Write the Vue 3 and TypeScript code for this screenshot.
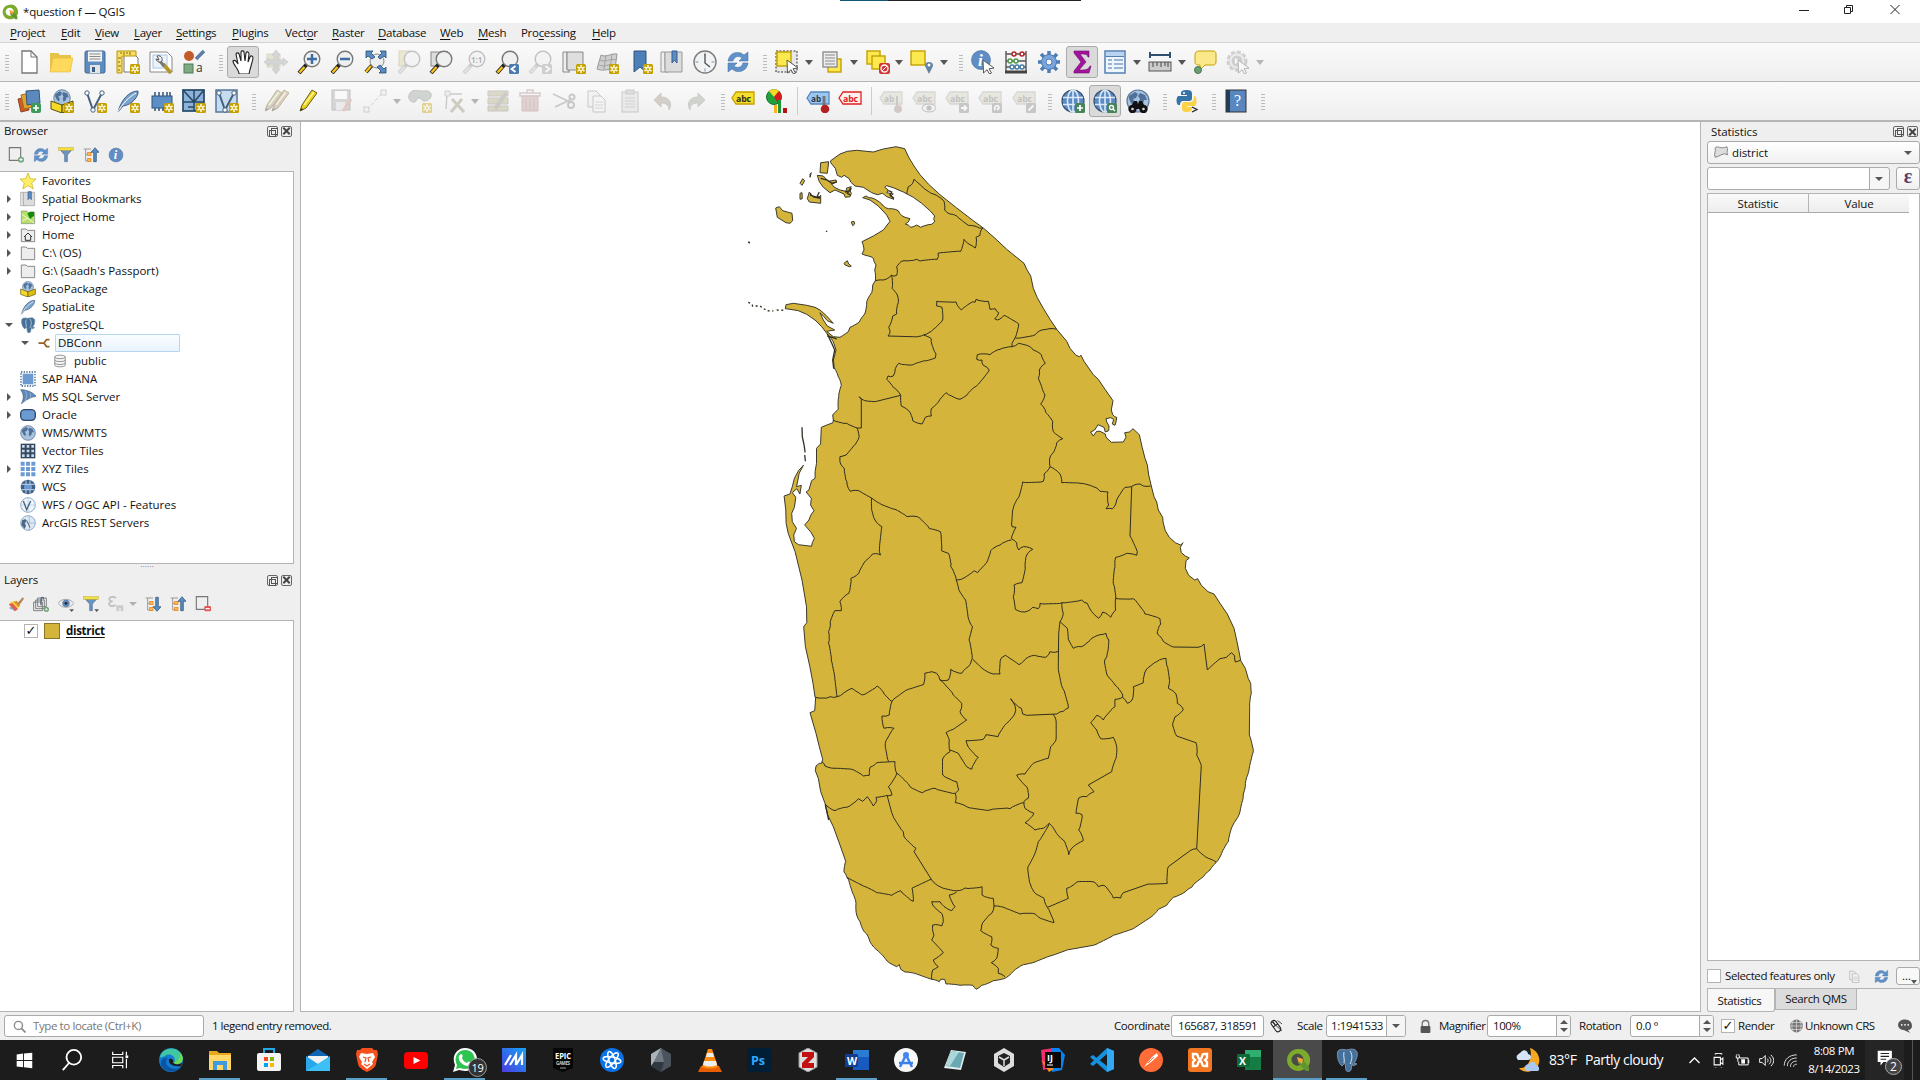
<script setup lang="ts">
type Pt = [number, number]
type Sheet = { x: number; y: number; sx: number; sy: number }
interface Tool { x: number; k: string; on?: boolean; dim?: boolean }

/* ---------- icon fragments ---------- */
const star = '<g><rect x="14" y="14" width="10" height="10" rx="1.5" fill="#c4a000"/><path d="M19 15v8M15.500 17l7 4M22.500 17l-7 4" stroke="#fffbe0" stroke-width="1.500"/><circle cx="19" cy="19" r="1.100" fill="#c4a000"/></g>'
const mag = (inner: string, gray = false) =>
  `<path d="M2 23l8-9" stroke="${gray ? '#999' : '#222'}" stroke-width="4"/><path d="M2.500 22.500l5-5.500" stroke="${gray ? '#ccc' : '#f8c41c'}" stroke-width="2.400"/><circle cx="15" cy="9" r="7.800" fill="#eef1ef" stroke="#777" stroke-width="1.400"/>${inner}`
const back = (d: string, c: string) => `<rect x="14" y="14" width="10" height="10" rx="1.500" fill="${c}"/><path d="${d}" fill="none" stroke="#fff" stroke-width="1.800"/>`
const tag = (fill: string, stroke: string, txt: string, tc: string) =>
  `<path d="M1 9l4-6h18v12H5z" fill="${fill}" stroke="${stroke}" stroke-width="1.300"/><text x="5" y="12.500" font-family="Open Sans, sans-serif" font-weight="700" font-size="9.500" textLength="${txt.length * 5}" lengthAdjust="spacingAndGlyphs" fill="${tc}">${txt}</text>`
const globe = '<circle cx="12" cy="12" r="11" fill="#5b8ac6" stroke="#39536f" stroke-width="1.200"/><g fill="none" stroke="#dbe9f5" stroke-width="1.600"><path d="M2 8.500h20M2 15.500h20M12 1v22"/><ellipse cx="12" cy="12" rx="5.500" ry="11"/></g>'
const earth = '<circle cx="12" cy="12" r="11" fill="#a9c3df" stroke="#5e7a99" stroke-width="1.200"/><path d="M3 7l6-4 3 2-2 4-3 1 2 3-1 4-3-3-2-4zM14 4l5 2 2 5-3 0-1 4-3 2-1-4 1-3-2-3z" fill="#4f7099"/>'
const cursor = '<path d="M12 10l11 8-5 .8 2.500 4.200-2 1-2.500-4.300L12.500 23z" fill="#fff" stroke="#555"/>'
const refresh = '<path d="M2 11C3 4 9 1 15 3l3 2 4-3v9h-9l3-3c-4-3-8-1-9 3z" fill="#5f92cb" stroke="#426a98" stroke-width=".5"/><path d="M22 13c-1 7-7 10-13 8l-3-2-4 3v-9h9l-3 3c4 3 8 1 9-3z" fill="#5f92cb" stroke="#426a98" stroke-width=".5"/>'
const pencil = (c: string) => `<path d="M3 22l2-6L15 1l5 3L9 19z" fill="${c}" stroke="#6a5f18" stroke-width="1"/><path d="M7 16L17 3" stroke="#fff8a0" stroke-width="1.300"/><path d="M3 22l1.500-3 2 1.500z" fill="#333"/>`
const funnel = '<path d="M2 3h20l-8 9v10h-4V12z" fill="#6c93bd" stroke="#4b7195"/><rect x="1" y="1" width="22" height="4" fill="#f5df3c" stroke="#b9a634" stroke-width=".7"/>'
const tree = (d: string) => `<path d="M1 3h11M4 3v18h7M4 11h7" fill="none" stroke="#999" stroke-width="1.500"/><rect x="7" y="8" width="5" height="5" fill="#ffb64d" stroke="#e48113"/><rect x="7" y="17" width="5" height="5" fill="#ffb64d" stroke="#e48113"/><path d="${d}" fill="#5a8cc4" stroke="#284b70"/>`
const box = '<path d="M1 12l11 4v8L1 20z" fill="#f5d926" stroke="#57500f"/><path d="M12 16l11-4v8l-11 4z" fill="#e0bf14" stroke="#57500f"/>'
const qlogo = '<path d="M12 1a11 11 0 1 0 7 19.500l-4-4A6 6 0 1 1 17.500 12v3l4 4A11 11 0 0 0 12 1z" fill="#7cab2b"/><path d="M12 11h4l7 8v4h-3l-8-8z" fill="#5f9430"/><path d="M11 9l6 2-1 5-4-3z" fill="#f3a33a"/>'
const elephant = '<path d="M3 3c3-3 7-1 9-1 3-1 8-2 10 2 1 4-1 9-3 11l3 1-4 2-1-3-1 7c-1 2-5 2-5 0l-1-7-3 3c-3-2-6-10-4-15z" fill="#44719c" stroke="#7a8fa6"/><path d="M9 4c-1 5 1 7 0 11M15 3c3 4 2 9 0 13" fill="none" stroke="#dce6ef"/>'
const feather = '<path d="M2 23C5 11 13 2 22 2c1 5-6 14-15 15z" fill="#7aa3cf" stroke="#3d5e82"/><path d="M1 24C7 14 13 8 20 4" fill="none" stroke="#fff"/>'
const folder = '<path d="M2 6V3h7l2 2h11v17H2z" fill="#ededed" stroke="#8a8a8a" stroke-width="1.500"/>'
const vee = '<path d="M4 4l6 17L19 4" fill="none" stroke="#44617d" stroke-width="2"/><g fill="#fff" stroke="#44617d"><circle cx="4" cy="4" r="2.200"/><circle cx="19" cy="4" r="2.200"/><circle cx="10" cy="21" r="2.200"/></g>'
const gear = (c: string, s: string) => `<g stroke="${s}" stroke-width="3.500"><path d="M12 1v22M1 12h22M4 4l16 16M20 4L4 20"/></g><circle cx="12" cy="12" r="7.500" fill="${c}" stroke="${s}" stroke-width="1"/><circle cx="12" cy="12" r="3" fill="#f5f5f5" stroke="${s}"/>`
const info = '<circle cx="10" cy="10" r="9.500" fill="#5f8dc4" stroke="#426a98" stroke-width=".6"/><text x="7" y="16" font-family="Liberation Serif, serif" font-style="italic" font-weight="700" font-size="17" fill="#fff">i</text>'
const sel = (x: number, y: number, s = 13) => `<rect x="${x}" y="${y}" width="${s}" height="${s}" fill="#fce94f" stroke="#c4a000" stroke-width="1.400"/>`
const sq = (c: string, inner: string) => `<rect x="0" y="0" width="24" height="24" rx="2" fill="${c}"/>${inner}`
const label = (t: string, x: number, y: number, s: number, c = '#fff') => `<text x="${x}" y="${y}" font-family="Open Sans, sans-serif" font-weight="700" font-size="${s}" fill="${c}">${t}</text>`
const office = (a: string, b: string, c: string, t: string) => `<path d="M8 2h16v20H8z" fill="${a}"/><path d="M8 9h16v13H8z" fill="${b}"/><rect x="0" y="6" width="13" height="13" rx="1" fill="${c}"/>${label(t, 2, 16.5, 10.5)}`

const icons: Record<string, string> = {
  newdoc: '<path d="M5 1h9l6 6v16H5z" fill="#fff" stroke="#777" stroke-width="1.300"/><path d="M14 1v6h6" fill="none" stroke="#777"/>',
  open: '<path d="M1 3h8l2 2h11v16H1z" fill="#e8c34c"/><path d="M4 8h20l-3 14H1z" fill="#ffd95c" stroke="#e0b838" stroke-width=".6"/>',
  save: '<rect x="2" y="1" width="20" height="22" rx="1.500" fill="#5c8cc0" stroke="#44698f"/><rect x="5" y="1.500" width="14" height="10" fill="#f4f4f4"/><path d="M6.500 4h11M6.500 6.500h11M6.500 9h11" stroke="#888"/><rect x="7" y="15" width="10" height="8" fill="#e4e4e4"/><rect x="9" y="17" width="3" height="5" fill="#3d5f86"/>',
  layoutnew: '<path d="M8 5h11l3 3v14H8z" fill="#fff" stroke="#777"/><path d="M1 1h19v5H6v17H1z" fill="#f8df66" stroke="#b89209"/><path d="M5 2v2M8 2v3M11 2v2M14 2v3M2 8h3M2 12h2M2 16h3M2 20h2" stroke="#896c0a"/>' + star,
  layouts: '<path d="M1 2h17l5 5v15H1z" fill="#fff" stroke="#888"/><rect x="4" y="5" width="14" height="13" fill="#edf3fb" stroke="#aac4e8"/><path d="M14 14l8 9" stroke="#b5962c" stroke-width="4"/><path d="M10 10l5 6" stroke="#777" stroke-width="3"/><path d="M8 6c3-1 6 1 5 5-2 2-5 1-6-2l3 1z" fill="#eee" stroke="#555"/>',
  style: '<circle cx="7" cy="6" r="5" fill="#c25a2a"/><path d="M14 9L22 1" stroke="#5c7ea5" stroke-width="3.500"/><rect x="2" y="14" width="9" height="9" fill="#7dab83" stroke="#4f7c55"/><text x="14" y="21.500" font-family="Open Sans, sans-serif" font-size="12" fill="#333">a</text>',
  hand: '<path d="M8 24c0-5-6-9-6-13 2-2 4 1 5 3L5 4c1-2 3-1 3 0l2 7V2c1-2 3-1 3 0l1 9 1-8c1-2 3-1 3 1l-1 8 2-5c1-2 3-1 3 1-1 6-3 10-4 16z" fill="#fff" stroke="#222" stroke-width="1.100"/>',
  panto: '<rect x="3" y="4" width="13" height="13" fill="#cfc79c" stroke="#b3ab83"/><path d="M12 0l4 5h-2v5h5V8l5 4-5 4v-2h-5v5h2l-4 5-4-5h2v-5H5v2l-5-4 5-4v2h5V5H8z" fill="#a3aaa8" stroke="#888" stroke-width=".7"/>',
  zin: mag('<path d="M15 4v10M10 9h10" stroke="#3e6ea3" stroke-width="2.500"/>'),
  zout: mag('<path d="M10 9h10" stroke="#3e6ea3" stroke-width="2.500"/>'),
  zfull: '<path d="M2 22l8-9" stroke="#222" stroke-width="4"/><path d="M2 22l5-6" stroke="#f8c41c" stroke-width="2.300"/><circle cx="13" cy="11" r="7" fill="#eee" stroke="#888"/><path d="M2 1h7L7 3l4 4-3 2-4-3-2 2zM22 1v7l-2-2-4 3-2-2 4-4-2-2zM22 23h-7l2-2-4-4 3-2 4 4 2-2z" fill="#5a8cc4" stroke="#284b70" stroke-width=".8"/>',
  zsel: '<rect x="2" y="1" width="11" height="15" fill="#dbd49c" stroke="#a9a372"/>' + mag('', true),
  zlayer: '<rect x="2" y="2" width="12" height="14" fill="#ddd" stroke="#888"/>' + mag(''),
  znative: mag(label('1:1', 9, 12.5, 8, '#555'), true),
  zlast: mag('') + back('M20.500 16l-4 3 4 3', '#4c7cae'),
  znext: mag('', true) + back('M17.500 16l4 3-4 3', '#999'),
  mapnew: '<path d="M1 2h4v17l3 3H1z" fill="#eee" stroke="#888"/><path d="M5 2h16v18H5z" fill="#dedede" stroke="#888"/>' + star,
  map3d: '<path d="M6 5c6 3 9-2 16-1l-2 15c-6-1-10 3-18 0z" fill="#cfcfcf" stroke="#999"/><path d="M5 10c6 3 9-2 16 0M4 15c6 3 9-2 16 0M11 5L9 19M17 4l-2 15" fill="none" stroke="#a2a2a2"/>' + star,
  bookmarknew: '<path d="M5 1h12v21l-6-5-6 5z" fill="#4c7fb8" stroke="#2d537c"/>' + star,
  bookmarks: '<path d="M1 2h4v17l3 3H1z" fill="#eee" stroke="#999"/><path d="M5 2h17v20H5z" fill="#dcdcdc" stroke="#999"/><path d="M12 1h5v12l-2.500-3-2.500 3z" fill="#5c8cc4" stroke="#365c8a"/>',
  clock: '<circle cx="12" cy="12" r="11" fill="#f2f3f3" stroke="#7d7d7d" stroke-width="1.400"/><path d="M12 2.500v3M12 18.500v3M2.500 12h3M18.500 12h3" stroke="#7895b5"/><path d="M12 4v9l5 4" fill="none" stroke="#555" stroke-width="1.400"/>',
  refresh,
  select: '<rect x="1" y="1" width="21" height="21" fill="#e8e8e8" stroke="#333" stroke-dasharray="2 1.500"/>' + sel(2, 2, 14) + cursor,
  selform: sel(8, 9, 13) + '<rect x="3" y="2" width="14" height="15" fill="#eee" stroke="#888" stroke-width="1.300"/><path d="M5 5h10M5 8h10M5 11h10M5 14h10" stroke="#888"/>',
  desel: sel(1, 1, 13) + sel(6, 6, 13) + '<rect x="13" y="13" width="11" height="11" rx="2" fill="#d33636"/><circle cx="18.500" cy="18.500" r="3.500" fill="none" stroke="#fff" stroke-width="1.300"/><path d="M16 21l5-5" stroke="#fff"/>',
  selloc: sel(1, 1, 14) + '<path d="M19 24l-4-8a4 4 0 1 1 8 0z" fill="#6383a5"/><circle cx="19" cy="15" r="1.500" fill="#fff"/>',
  identify: info + cursor,
  abacus: '<path d="M2 1v20M22 1v20M2 4h20M2 11h20M2 17h20" fill="none" stroke="#555" stroke-width="1.400"/><path d="M1 22h22" stroke="#444" stroke-width="3"/><g fill="#fff" stroke-width="1.500"><g stroke="#b22"><circle cx="10" cy="4" r="2"/><circle cx="18" cy="4" r="2"/></g><g stroke="#4c9a48"><circle cx="6" cy="11" r="2"/><circle cx="12" cy="11" r="2"/></g><g stroke="#467ca8"><circle cx="8" cy="17" r="2"/><circle cx="13" cy="17" r="2"/><circle cx="18" cy="17" r="2"/></g></g>',
  gear: gear('#79a5dc', '#4d7db5'),
  sigma: '<path d="M4 1h15v6h-1c-1-3-2-3-8-3l6 8-7 8c7 0 9 0 11-4h1l-2 7H4v-2l7-9-7-9z" fill="#a3139e" stroke="#6e0a6c" stroke-width=".6"/>',
  table: '<rect x="2" y="1" width="20" height="22" fill="#eef5fc" stroke="#5380b2" stroke-width="1.500"/><path d="M3 2h18v4H3z" fill="#b9d4f0"/><path d="M5 10h4M11 10h9M5 14h4M11 14h9M5 18h4M11 18h9" stroke="#7f9fc2" stroke-width="1.500"/><path d="M3 6.500h18" stroke="#5380b2"/>',
  measure: '<path d="M2 5h20M2 2v6M22 2v6" stroke="#30506e" stroke-width="2"/><rect x="1" y="12" width="22" height="9" fill="#ccc" stroke="#555"/><path d="M5 12v5M9 12v4M13 12v5M17 12v4M20 12v5" stroke="#444"/>',
  tips: '<path d="M6 1h14c3 0 3 2 3 4v7c0 3-2 3-4 3h-7l-5 5v-5c-4 0-5-1-5-3V5c0-3 2-4 4-4z" fill="#fbe88a" stroke="#c4a000"/><circle cx="5" cy="20" r="3.500" fill="#6d9d72" stroke="#4b7a50"/>',
  action: '<circle cx="11" cy="11" r="9" fill="none" stroke="#999" stroke-width="3" stroke-dasharray="4 2"/><circle cx="11" cy="11" r="8" fill="#e2e2e2" stroke="#999"/><circle cx="11" cy="11" r="5.500" fill="#999"/><path d="M9 8l5 3-5 3z" fill="#fff"/>' + cursor,
  dsource: '<path d="M1 10l9-2 2 13-8 2z" fill="#d05a25" stroke="#94401a"/><path d="M4 6l9-2 3 14-9 2z" fill="#dfa431" stroke="#9d6f1d"/><path d="M9 2l13-1 1 13-13 2z" fill="#5c89bd" stroke="#355579"/><rect x="14" y="14" width="10" height="10" rx="2" fill="#3f9a5a"/><path d="M19 16v6M16 19h6" stroke="#fff" stroke-width="1.700"/>',
  geopkg: `<g transform="translate(3 0) scale(.75)">${earth}</g>` + box + star,
  shp: vee + star,
  splite: feather + star,
  memory: '<rect x="2" y="7" width="20" height="12" fill="#5d8fc7" stroke="#2f5478"/><path d="M5 3v4M9 3v4M13 3v4M17 3v4M20 3v4M5 19v3M9 19v3M13 19v3" stroke="#2f5478" stroke-width="1.500"/>' + star,
  mesh: '<rect x="1" y="1" width="21" height="21" fill="#8db1d8" stroke="#254866" stroke-width="1.700"/><path d="M1 13h21M12 1v21M1 1l11 12L22 1M6 18h6" fill="none" stroke="#254866" stroke-width="1.500"/>' + star,
  vtile: '<rect x="1" y="1" width="21" height="22" fill="#c6dbf0" stroke="#51779c" stroke-width="1.500"/>' + vee + star,
  edits: `<g transform="translate(-3 0)">${pencil('#a89c88')}</g><g transform="translate(4 0)">${pencil('#b08f87')}</g>`,
  pencil: pencil('#ecd21d'),
  saveedit: '<rect x="2" y="1" width="18" height="20" fill="#aaa" stroke="#777"/><rect x="5" y="2" width="12" height="8" fill="#fff"/><rect x="6" y="13" width="9" height="8" fill="#ddd"/><path d="M13 22l8-12" stroke="#c9877a" stroke-width="3"/>',
  digit: '<path d="M4 21L20 3" stroke="#999" stroke-dasharray="4 2"/><g fill="#eee" stroke="#999"><rect x="1" y="18" width="5" height="5"/><rect x="18" y="1" width="5" height="5"/></g>',
  polyadd: '<path d="M2 4c3-4 7-2 11-2s9-1 10 3-3 7-7 7c-2 0-3-3-5-3-3 0-2 5-6 4-5-1-5-6-3-9z" fill="#9aa39a" stroke="#777"/>' + star,
  vertex: '<path d="M4 20L5 5h15" fill="none" stroke="#888" stroke-width="1.400"/><path d="M3 2h5v5H3z" fill="#ddd" stroke="#999"/><path d="M9 23L20 10M10 10l12 13" stroke="#999078" stroke-width="3"/>',
  multiedit: '<path d="M2 2h20v5H2zM2 9h20v6H2zM2 17h20v5H2z" fill="#b5b07e" stroke="#888"/><path d="M9 20L20 4" stroke="#958d80" stroke-width="4"/>',
  del: '<path d="M4 7h16v15H4z" fill="#c3a0a0" stroke="#a77"/><path d="M2 4h20v3H2zM9 1h6v3H9zM8 9v12M12 9v12M16 9v12" fill="none" stroke="#a98b8b" stroke-width="1.500"/>',
  cut: '<path d="M1 5l17 8M3 18l17-8" stroke="#888" stroke-width="1.700"/><circle cx="19" cy="16" r="3" fill="none" stroke="#888" stroke-width="2"/><circle cx="20" cy="8" r="2.500" fill="none" stroke="#888" stroke-width="2"/>',
  copy: '<path d="M3 2h8l4 4v12H3z" fill="#eee" stroke="#888"/><path d="M8 7h8l4 4v12H8z" fill="#f5f5f5" stroke="#888"/><path d="M10 13h8M10 16h8M10 19h8" stroke="#aaa"/>',
  paste: '<rect x="4" y="3" width="16" height="20" fill="#ddd" stroke="#888"/><rect x="8" y="1" width="8" height="4" fill="#bbb" stroke="#888"/><path d="M7 9h10M7 12h10M7 15h10M7 18h10" stroke="#999"/>',
  undo: '<path d="M3 11l7-7v4c8 0 12 6 8 13 0-5-3-7-8-7v4z" fill="#a39888" stroke="#8f8f85"/>',
  redo: '<path d="M21 11l-7-7v4c-8 0-12 6-8 13 0-5 3-7 8-7v4z" fill="#98a394" stroke="#8f958c"/>',
  abc: tag('#f5df2c', '#c4a000', 'abc', '#2e2e1a'),
  diagram: '<circle cx="8" cy="8" r="7.500" fill="#1fa23c" stroke="#16732a"/><path d="M8 8L3 2C6-.5 11 0 13 2z" fill="#f7da25"/><path d="M8 8l5-6c4 4 3 10-1 12z" fill="#d51b1b"/><path d="M8 16h3v8H8z" fill="#f7b41c"/><path d="M12 11h3v13h-3z" fill="#1d9439"/><path d="M17 19h4v5h-4z" fill="#b71212"/>',
  abpin: tag('#9cc6f2', '#5688bd', 'ab', '#27384a') + '<path d="M18 7v10" stroke="#777" stroke-width="3"/><circle cx="19" cy="20" r="4.300" fill="#b41f1f"/>',
  abcred: tag('#fff0f0', '#e02020', 'abc', '#e02020'),
  lab1: tag('#d2d0bd', '#aaa', 'ab', '#777') + '<path d="M18 7v10" stroke="#888" stroke-width="2"/><circle cx="19" cy="20" r="4" fill="#a58a8a"/>',
  lab2: tag('#d2d0bd', '#aaa', 'abc', '#777') + '<ellipse cx="17" cy="19" rx="7" ry="4" fill="#eee" stroke="#777"/><circle cx="17" cy="19" r="2.500" fill="#777"/>',
  lab3: tag('#d2d0bd', '#aaa', 'abc', '#777') + back('M16 19h5M19 16.500l2.500 2.500-2.500 2.500', '#888'),
  lab4: tag('#d2d0bd', '#aaa', 'abc', '#777') + back('M17 21c-2-4 4-6 4-2l-2 2', '#888'),
  lab5: tag('#d2d0bd', '#aaa', 'abc', '#777') + back('M16.500 21.500l5-5', '#888'),
  globeadd: globe + '<rect x="14" y="14" width="10" height="10" rx="1.500" fill="#48845a"/><path d="M19 16v6M16 19h6" stroke="#fff" stroke-width="1.700"/>',
  globesearch: globe + '<rect x="14" y="14" width="10" height="10" rx="1.500" fill="#48845a"/><circle cx="18.500" cy="18.500" r="2" fill="none" stroke="#fff" stroke-width="1.300"/><path d="M20 20l2 2" stroke="#fff" stroke-width="1.300"/>',
  binoc: earth + '<path d="M4 20l4-8h3l1 3 1-3h3l4 8z" fill="#111"/><circle cx="6.500" cy="20" r="4.200" fill="#111"/><circle cx="17.500" cy="20" r="4.200" fill="#111"/><circle cx="6.500" cy="20" r="1.300" fill="#ddd"/><circle cx="17.500" cy="20" r="1.300" fill="#ddd"/>',
  python: '<path d="M11 1c5 0 6 1 6 4v4c0 3-2 3-4 3H8c-2 0-3 2-3 4H3c-2-2-2-7 0-9h9V6H6V4c0-2 2-3 5-3z" fill="#3773a6"/><path d="M19 7h1c2 2 2 8 0 10h-8v1h5v2c0 2-2 3-5 3-4 0-5-1-5-4v-3c0-3 2-3 4-3h4c3 0 4-2 4-6z" fill="#fad247"/><circle cx="9" cy="4" r="1" fill="#fff"/><path d="M17 18l5 2.500-5 2.500" fill="none" stroke="#222" stroke-width="1.300"/>',
  help: '<rect x="2" y="1" width="20" height="22" fill="#5886bf" stroke="#333"/><path d="M2 1h4v22H2z" fill="#263a52"/><text x="10" y="17" font-family="Liberation Serif, serif" font-size="16" fill="#fff">?</text>',
  addlayer: '<path d="M2 1h17v19H2z" fill="#efefef" stroke="#777" stroke-width="1.700"/><circle cx="19.500" cy="19" r="4.500" fill="#6ea57a"/><path d="M19.500 16.500v5M17 19h5" stroke="#fff" stroke-width="1.500"/>',
  filter: funnel,
  collapse: tree('M18 1l6 7h-4v14h-4V8h-4z'),
  expand: tree('M18 23l6-7h-4V2h-4v14h-4z'),
  infob: `<g transform="translate(1 1) scale(1.100)">${info}</g>`,
  brush: '<path d="M13 12l9-10 2 2-8 11z" fill="#b88352"/><path d="M2 10l8-3 8 8-6 7z" fill="#f3cf48"/><path d="M1 12l6-1 8 9-5 3z" fill="#df5f4f"/><path d="M1 18l4-2 5 6z" fill="#77a8dc"/><path d="M9 9l4-2 5 7-2 3z" fill="#d68e32"/>',
  group: '<path d="M1 9h13v13H1zM4 6h13v13H4zM7 3h13v13H7z" fill="#efefef" stroke="#777" stroke-width="1.400"/><path d="M12 14V5c0-4 4-4 4 0" fill="none" stroke="#3f6080" stroke-width="2"/><circle cx="20" cy="20" r="4" fill="#6ea57a"/><path d="M20 18v4M18 20h4" stroke="#fff"/>',
  eye: '<path d="M0 11C5 3 18 3 24 11 18 19 6 19 0 11z" fill="#eee" stroke="#888"/><circle cx="12" cy="11" r="5.500" fill="#5d86b3"/><circle cx="12" cy="11" r="2" fill="#223"/><path d="M17 20h7l-3.500 4z" fill="#555"/>',
  filterm: funnel + '<path d="M17 20h7l-3.500 4z" fill="#555"/>',
  eps: '<path d="M12 3C8 0 2 1 2 5c0 2 2 3 5 3-4 0-6 2-5 5 2 3 7 3 9 0" fill="none" stroke="#777" stroke-width="2.500"/><path d="M12 14h11v9h-4v-5h-2v5h-4z" fill="#999"/>',
  remove: '<path d="M2 1h17v19H2z" fill="#efefef" stroke="#777" stroke-width="1.700"/><rect x="14" y="15" width="10" height="8" rx="2" fill="#e25555"/><path d="M16 19h6" stroke="#fff" stroke-width="2"/>',
  favorite: '<path d="M12 0l3.500 8.500L24 9l-6.500 6 2.500 9-8-5-8 5 2.500-9L0 9l8.500-.5z" fill="#fdee63" stroke="#c4a91c"/>',
  projhome: '<path d="M2 3h8l2 2h10v17H2z" fill="#b7e06b" stroke="#888"/><path d="M3 8l18 13M3 18l8-4" stroke="#effad8" stroke-width="1.500"/><path d="M11 7l4-3h6v6l-6 5z" fill="#12890f"/>',
  home: folder + '<path d="M6 15l6-6 6 6M8 14v6h8v-6" fill="none" stroke="#333" stroke-width="1.500"/>',
  folder,
  gpkg: `<g transform="translate(3 0) scale(.75)">${earth}</g>` + box,
  feather,
  elephant,
  conn: '<path d="M1 12h11M23 5h-6l-5 7 5 7h6" fill="none" stroke="#946222" stroke-width="3.500"/>',
  db: '<path d="M3 5v14c0 4 18 4 18 0V5c0-4-18-4-18 0zM3 5c0 4 18 4 18 0M3 10c0 4 18 4 18 0M3 15c0 4 18 4 18 0" fill="#f5f5f5" stroke="#888" stroke-width="1.500"/>',
  hana: '<rect x="4" y="4" width="16" height="16" fill="#6c9bd2"/><rect x="1.500" y="1.500" width="21" height="21" fill="none" stroke="#3b5f86" stroke-width="2" stroke-dasharray="2 2"/>',
  mssql: '<path d="M1 1c9 0 19 4 23 10-7 1-15 5-22 11C6 15 6 8 1 1z" fill="#5f89b8" stroke="#3c5d80"/><path d="M8 3c3 5 2 10 0 15M15 6c2 4 1 7-1 9" fill="none" stroke="#a9c3df"/>',
  oracle: '<rect x="1" y="4" width="22" height="16" rx="6" fill="#6c9bd2" stroke="#2e4a68" stroke-width="2"/>',
  earth,
  grid: '<rect x="1" y="1" width="22" height="22" fill="#34495e"/><path d="M3 3h4v4H3zM10 3h4v4h-4zM17 3h4v4h-4zM3 10h4v4H3zM10 10h4v4h-4zM17 10h4v4h-4zM3 17h4v4H3zM10 17h4v4h-4zM17 17h4v4h-4z" fill="#c7d8ea"/>',
  xyz: '<path d="M1 1h6v6H1zM9 1h6v6H9zM17 1h6v6h-6zM1 9h6v6H1zM9 9h6v6H9zM17 9h6v6h-6zM1 17h6v6H1zM9 17h6v6H9zM17 17h6v6h-6z" fill="#6c9bd2"/>',
  wcs: '<circle cx="12" cy="12" r="11" fill="#415f80"/><path d="M2 8h20M2 16h20M9 2v20M15 2v20" stroke="#a9c6e6" stroke-width="1.700"/><rect x="6" y="9" width="12" height="6" rx="2" fill="#6c9bd2"/>',
  wfs: '<circle cx="12" cy="12" r="11" fill="#eef4fa" stroke="#7e9fc1" stroke-width="1.300"/><path d="M1 12h22M12 1v22" stroke="#b3cbe2"/><path d="M5 6l5 13 6-13" fill="none" stroke="#41617f" stroke-width="2"/>',
  arcgis: '<circle cx="12" cy="12" r="11" fill="#dce8f4" stroke="#7e9fc1" stroke-width="1.300"/><path d="M2 12h21M14 1v22" stroke="#8fb0d2"/><path d="M3 8l5-2 2 3-3 3 2 4-2 5-5-6z" fill="#4a6785"/><path d="M10 8l5 11" stroke="#333"/>',
  poly: '<path d="M2 5c5-5 8 3 20-2 3 4-1 9 1 14-7-5-11 2-21 4-3-6 2-10 0-16z" fill="#ddd" stroke="#777" stroke-width="1.500"/>',
  search: '<circle cx="10" cy="10" r="7.500" fill="none" stroke="#888" stroke-width="2.500"/><path d="M15 15l8 8" stroke="#888" stroke-width="3"/>',
  extents: '<g transform="rotate(-35 12 12)"><rect x="6" y="0" width="10" height="23" rx="5" fill="#eee" stroke="#222" stroke-width="2"/><path d="M11 1v9M6 10h10" stroke="#222" stroke-width="2"/></g><path d="M2 3l20 18M14 2l8 6" stroke="#333" stroke-width="1.600"/>',
  lock: '<path d="M6 12V7c0-8 12-8 12 0v5" fill="none" stroke="#777" stroke-width="2.500"/><rect x="3" y="11" width="18" height="13" rx="2" fill="#555"/>',
  crs: '<circle cx="12" cy="12" r="11" fill="#777"/><path d="M1 12h22M3 6h18M3 18h18M12 1v22M7 2c-4 6-4 14 0 20M17 2c4 6 4 14 0 20" fill="none" stroke="#eee"/>',
  chat: '<path d="M12 1c15 0 15 18 5 18l4 5-11-5C-4 18-3 1 12 1z" fill="#555"/><g fill="#fff"><circle cx="6.500" cy="10" r="1.500"/><circle cx="12" cy="10" r="1.500"/><circle cx="17.500" cy="10" r="1.500"/></g>',
  qlogo,
  /* taskbar */
  win: '<path d="M4 6l7-1v7H4zM12 5l9-1v8h-9zM4 13h7v7l-7-1zM12 13h9v8l-9-1z" fill="#fff"/>',
  wsearch: '<circle cx="14" cy="9" r="8" fill="none" stroke="#fff" stroke-width="2"/><path d="M9 15l-7 8" stroke="#fff" stroke-width="2"/>',
  taskview: '<path d="M4 3v3h11V3M4 21v-3h11v3M4 9h11v6H4zM19 3v4M19 11v10" fill="none" stroke="#fff" stroke-width="1.300"/><path d="M18 7h3v3h-3z" fill="#fff"/>',
  edge: '<circle cx="12" cy="12" r="12" fill="#127ad1"/><path d="M1 9C4-3 22-2 24 10c0 5-5 7-9 5 3-6-4-11-9-7-3 1-4 2-5 1z" fill="#40c6a0"/><path d="M14 15c3 2 7 1 9-1 1-3 1-6-2-9 1 5-2 8-7 10z" fill="#73d94d"/><path d="M9 10c-5 4 0 14 12 10-5 6-16 4-19-3-1-5 3-8 7-7z" fill="#0c55a3"/><path d="M10 11c2-1 5 0 4 4l2 1c2 1 5 0 7-1l-1 3c-8 1-13-2-12-7z" fill="#1c1c1c"/>',
  explorer: '<path d="M1 3h8l2 2h12v17H1z" fill="#e8a81c"/><path d="M1 7h22v15H1z" fill="#ffd869"/><path d="M5 13h14v9h-4v-5H9v5H5z" fill="#3f9ae0"/>',
  store: '<path d="M7 6V1h10v5" fill="none" stroke="#22a7e8" stroke-width="2"/><rect x="0" y="5" width="24" height="18" rx="2" fill="#f4f4f4"/><path d="M7 9h4v4H7z" fill="#f25022"/><path d="M13 9h4v4h-4z" fill="#7fba00"/><path d="M7 15h4v4H7z" fill="#00a4ef"/><path d="M13 15h4v4h-4z" fill="#ffb900"/>',
  mail: '<path d="M0 9l12-8 12 8v14H0z" fill="#1066b3"/><path d="M2 8h20v8H2z" fill="#f2f2f2"/><path d="M0 8l12 8 12-8v15H0z" fill="#28a8ea"/><path d="M0 23l24-14v14z" fill="#3cc0f5"/>',
  brave: '<path d="M7 0h10l2 2h3l1 4-2 10c-1 4-5 6-9 8-4-2-8-4-9-8L1 6l1-4h3z" fill="#f5501e"/><path d="M6 5l6 1 6-1 2 4-3 5 1 2-6 5-6-5 1-2-3-5z" fill="#fff"/><path d="M8 9l3 1-1 4M16 9l-3 1 1 4M9 16l3 2 3-2" fill="none" stroke="#f5501e" stroke-width="1.200"/>',
  youtube: '<rect x="0" y="4" width="24" height="17" rx="4" fill="#f00"/><path d="M9.500 9l7 3.500-7 3.500z" fill="#fff"/>',
  whatsapp: '<path d="M0 24l2-7C-2 8 4 0 12 0c16 0 16 23 0 23-3 0-4-1-6-1z" fill="#fff"/><path d="M3 21l1-4C0 9 5 2 12 2c13 0 13 19 0 19-3 0-4-1-5-1z" fill="#2fc351"/><path d="M8 6c2 0 2 3 1 4 1 3 3 4 5 5 1-2 2-2 4 0-1 4-5 3-7 2-4-2-8-8-3-11z" fill="#fff"/>',
  ma: '<defs><linearGradient id="ma" x2="1" y1="1" y2="0"><stop stop-color="#4b3be0"/><stop offset="1" stop-color="#14a5f5"/></linearGradient></defs><rect width="24" height="24" fill="url(#ma)"/><path d="M3 17l6-10M8 17l6-10v10M14 17l6-10v10" fill="none" stroke="#fff" stroke-width="2.200"/>',
  epic: '<path d="M2 0h20v20l-10 4-10-4z" fill="#050505"/><text x="4" y="11" font-family="Open Sans, sans-serif" font-weight="700" font-size="9" textLength="16" lengthAdjust="spacingAndGlyphs" fill="#fff">EPIC</text><text x="5" y="17" font-family="Open Sans, sans-serif" font-weight="700" font-size="4.500" textLength="14" fill="#ccc">GAMES</text><path d="M9 20h6" stroke="#999"/>',
  bnet: '<circle cx="12" cy="12" r="12" fill="#0a72e8"/><g fill="none" stroke="#fff" stroke-width="1.400"><ellipse cx="12" cy="12" rx="9" ry="3" transform="rotate(10 12 12)"/><ellipse cx="12" cy="12" rx="9" ry="3" transform="rotate(70 12 12)"/><ellipse cx="12" cy="12" rx="9" ry="3" transform="rotate(130 12 12)"/></g>',
  gem: '<path d="M12 0l10 6v12l-10 6-10-6V6z" fill="#4a535c"/><path d="M12 0l-7 14-3 4V6z" fill="#aab3ba"/><path d="M12 0l3 14H5z" fill="#6e7880"/><path d="M5 14h10l-3 10-10-6z" fill="#303940"/>',
  vlc: '<path d="M3 18h18l3 6H0z" fill="#e85e00"/><path d="M10 1h4l6 18c-5 2-11 2-16 0z" fill="#ff8b0f"/><path d="M9 5h6l1 4H8zM6 13h12l1 4c-5 2-9 2-14 0z" fill="#eee"/>',
  ps: sq('#001e36', label('Ps', 4, 16.5, 12.5, '#31a8ff')),
  zot: '<path d="M12 0l9 5v14l-9 5-9-5V5z" fill="#ddd" stroke="#999"/><path d="M6 4h12v5l-6 6h6v5H6v-5l6-6H6z" fill="#c21111"/>',
  word: office('#2b7cd3', '#185abd', '#103f91', 'W'),
  astudio: '<circle cx="12" cy="12" r="12" fill="#f8f8f8"/><path d="M6 19l6-12 6 12M5 15h14" fill="none" stroke="#3b82e8" stroke-width="2.500"/><circle cx="12" cy="7" r="3" fill="#4285f4"/>',
  notepad: '<path d="M8 2l15 2-5 18-17-2z" fill="#e1eef0"/><path d="M8 3l13 2-4 15-14-2z" fill="#6aa9b3"/><path d="M8 3l8 1-9 14-4-.5z" fill="#a9d7da"/>',
  unity: '<path d="M12 0l10 6v12l-10 6-10-6V6z" fill="#ddd"/><path d="M12 5l6 3v7l-6 4-6-4V8z" fill="#222"/><path d="M12 12v6M12 12L7 9M12 12l5-3" stroke="#ddd" stroke-width="1.500"/>',
  ij: '<path d="M0 2l12-2 4 8-6 12-8 2z" fill="#f22e6e"/><path d="M10 0h8l6 7-3 15-10 2z" fill="#0a83f5"/><path d="M0 12l8 12 5-3z" fill="#fe8a1e"/><rect x="4" y="4" width="16" height="16" fill="#080808"/>' + label('IJ', 6, 13, 9) + '<path d="M6 17h6" stroke="#fff"/>',
  vscode: '<path d="M17 0l7 3v18l-7 3L0 9l3-2 14 11V6L3 18l-3-2z" fill="#1691e0"/><path d="M17 0l7 3v18l-7 3z" fill="#34a9f3"/>',
  postman: '<circle cx="12" cy="12" r="12" fill="#ff6c37"/><path d="M5 19l8-10 5-4 1 3-8 7z" fill="#fff"/><path d="M9 15l6-6" stroke="#ff6c37"/>',
  xampp: '<rect width="24" height="24" rx="3" fill="#f37623"/><path d="M5 6h3c3 0 1 5 4 5s1-5 4-5h3v4l-2 2 2 2v4h-3c-3 0-1-5-4-5s-1 5-4 5H5v-4l2-2-2-2z" fill="none" stroke="#fff" stroke-width="2.400"/>',
  excel: office('#2fae70', '#157c43', '#0f6b37', 'X'),
  weather: '<path d="M14 0c10 3 13 16 4 22-6 3-12 2-15-2 9 1 14-10 11-20z" fill="#f7a61f"/><path d="M2 12c-4-5 2-6 3-8 4-4 7 0 7 2 5 1 3 6 0 6z" fill="#d5e3f8"/><path d="M10 23c-4-6 2-6 4-8 3-3 6 0 6 2 4 1 4 6 1 6z" fill="#a9c9f2"/>',
  chev: '<path d="M4 16l8-8 8 8" fill="none" stroke="#fff" stroke-width="2"/>',
  meet: '<path d="M5 7h10v12H5zM15 11l4-3v10l-4-3M6 2c3-2 9-2 12 0M6 24c3 1 9 1 12 0" fill="none" stroke="#fff" stroke-width="1.700"/>',
  battery: '<path d="M8 8h13v11H6v-5M22 11v5M2 4v4h5V4M3 2v2M6 2v2M4.500 8v6" fill="none" stroke="#fff" stroke-width="1.600"/><path d="M10 10h6v7h-6z" fill="#fff"/>',
  sound: '<path d="M1 9h4l5-5v16l-5-5H1zM13 9c2 2 2 4 0 6M16 6c4 4 4 8 0 12M19 3c6 6 6 12 0 18" fill="none" stroke="#fff" stroke-width="1.500"/>',
  wifi: '<path d="M2 20C2 10 10 3 22 3M7 21C7 13 13 8 22 8M12 22c0-6 4-9 10-9M17 22c0-3 2-4 5-4" fill="none" stroke="#ddd" stroke-width="1.600"/>',
  notif: '<path d="M1 1h20v16H9l-4 5v-5H1z" fill="#fff"/><path d="M5 5h12M5 9h12M5 13h8" stroke="#222" stroke-width="1.500"/>',
}

/* ---------- window chrome ---------- */
const menus = [
  ['', 'P', 'roject', 51], ['', 'E', 'dit', 34], ['', 'V', 'iew', 39], ['', 'L', 'ayer', 42], ['', 'S', 'ettings', 56], ['', 'P', 'lugins', 53],
  ['Vect', 'o', 'r', 47], ['', 'R', 'aster', 46], ['', 'D', 'atabase', 62], ['', 'W', 'eb', 38], ['', 'M', 'esh', 43], ['Pro', 'c', 'essing', 71], ['', 'H', 'elp', 30],
] as [string, string, string, number][]

const parse = (s: string): Tool[] => s.trim().split(/\s+/).map((t) => {
  const [x, k, f] = t.split(':')
  return { x: +x, k, on: f === 'on', dim: f === 'dim' }
})
const bars = [
  parse('7:grip 29:newdoc 61:open 95:save 128:layoutnew 161:layouts 194:style 221:grip 243:hand:on 276:panto:dim 309:zin 342:zout 376:zfull 409:zsel:dim 441:zlayer 474:znative:dim 507:zlast 540:znext:dim 574:mapnew 607:map3d 641:bookmarknew 672:bookmarks 705:clock 738:refresh 765:grip 787:select 809:arr 832:selform 854:arr 878:desel 899:arr 922:selloc 944:arr 961:grip 983:identify 1016:abacus 1049:gear 1082:sigma:on 1115:table 1137:arr 1160:measure 1182:arr 1205:tips 1238:action:dim 1260:arr:dim'),
  parse('7:grip 29:dsource 62:geopkg 95:shp 128:splite 162:memory 194:mesh 227:vtile 254:grip 277:edits:dim 309:pencil 342:saveedit:dim 375:digit:dim 397:arr:dim 420:polyadd:dim 454:vertex:dim 475:arr:dim 498:multiedit:dim 530:del:dim 564:cut:dim 597:copy:dim 630:paste:dim 663:undo:dim 696:redo:dim 723:grip 743:abc 778:diagram 798:sep 818:abpin 850:abcred 872:sep 891:lab1:dim 924:lab2:dim 957:lab3:dim 990:lab4:dim 1024:lab5:dim 1050:grip 1073:globeadd 1105:globesearch:on 1138:binoc 1165:grip 1187:python 1214:grip 1236:help 1263:grip'),
]
const half = (k: string) => (k === 'grip' ? 2 : k === 'sep' ? 1 : k === 'arr' ? 5 : 12)
const gap = (list: Tool[], i: number) => {
  const prev = i ? list[i - 1].x + half(list[i - 1].k) : 0
  return `${list[i].x - half(list[i].k) - prev}px`
}

const nodes = [
  [0, '', 'favorite', 'Favorites'], [0, 'r', 'bookmarks', 'Spatial Bookmarks'], [0, 'r', 'projhome', 'Project Home'], [0, 'r', 'home', 'Home'],
  [0, 'r', 'folder', 'C:\\ (OS)'], [0, 'r', 'folder', "G:\\ (Saadh's Passport)"], [0, '', 'gpkg', 'GeoPackage'], [0, '', 'feather', 'SpatiaLite'],
  [0, 'd', 'elephant', 'PostgreSQL'], [1, 'd', 'conn', 'DBConn'], [2, '', 'db', 'public'], [0, '', 'hana', 'SAP HANA'], [0, 'r', 'mssql', 'MS SQL Server'],
  [0, 'r', 'oracle', 'Oracle'], [0, '', 'earth', 'WMS/WMTS'], [0, '', 'grid', 'Vector Tiles'], [0, 'r', 'xyz', 'XYZ Tiles'], [0, '', 'wcs', 'WCS'],
  [0, '', 'wfs', 'WFS / OGC API - Features'], [0, '', 'arcgis', 'ArcGIS REST Servers'],
] as [number, string, string, string][]

const browserTools = ['addlayer', 'refresh', 'filter', 'collapse', 'infob']
const apps = 'edge explorer:u store mail brave:u youtube whatsapp:u ma epic bnet gem vlc ps zot word:u astudio notepad unity ij vscode postman xampp excel qlogo:a elephant:u'
  .split(' ').map((s) => s.split(':'))

/* ---------- district map ---------- */
const A: Sheet = { x: 740, y: 130, sx: 3, sy: 3 }
const B: Sheet = { x: 740, y: 420, sx: 2.9037, sy: 3 }
const C: Sheet = { x: 780, y: 640, sx: 3, sy: 3 }
const D: Sheet = { x: 1000, y: 320, sx: 3, sy: 3 }
const pts = (s: Sheet, t: string): Pt[] => t.trim().split(/\s+/).map((p) => {
  const [a, b] = p.split(',').map(Number)
  return [s.x + a / s.sx, s.y + b / s.sy]
})
const rough = (p: Pt[], amp: number): Pt[] => {
  const out: Pt[] = [p[0]]
  for (let i = 1; i < p.length; i++) {
    const [x0, y0] = p[i - 1]
    const [x1, y1] = p[i]
    const len = Math.hypot(x1 - x0, y1 - y0)
    if (len > 4 && len < 24) {
      const n = Math.floor(len / 2.6)
      for (let j = 1; j < n; j++) {
        const t = j / n
        const r = Math.sin(x0 * 12.9 + y0 * 78.2 + j * 37.7) * amp
        out.push([x0 + (x1 - x0) * t - ((y1 - y0) / len) * r, y0 + (y1 - y0) * t + ((x1 - x0) / len) * r])
      }
    }
    out.push(p[i])
  }
  return out
}
const line = (p: Pt[], close = false) => 'M' + p.map(([x, y]) => `${x.toFixed(1)} ${y.toFixed(1)}`).join('L') + (close ? 'Z' : '')

const coast = line([
  ...pts(A, '272,92 300,72 322,64 350,61 400,66 430,57 468,50 494,56 506,82 522,108 540,134 565,162 600,194 650,234 700,272 730,294 765,325 800,358 852,400 860,418 872,438 880,475 892,503 910,535 930,568 950,598 980,634 990,655 1008,676 1018,680 1023,676 1032,694 1060,734 1075,748 1095,778'),
  ...pts(D, '325,222 339,242 334,270 338,284 344,290 350,292 348,306 345,316 337,312 341,298 332,293 318,296 320,306 327,318 326,332 316,336 312,322 294,314 284,330 272,336 280,348 290,334 300,334 316,342 318,352 334,367 370,366 378,352 374,338 388,336 399,326 418,344 426,380 435,415 442,434 446,465 454,498 462,530 470,546 475,570 488,592 489,606 496,632 508,652 526,668 542,675 549,668 541,682 544,698 556,708 568,714 558,722 556,745 566,766 584,780 593,776 604,796 624,815 642,822 660,850 682,882 702,925 711,965 719,1005 722,1022 736,1045 745,1076'),
  ...rough(pts(C, '1412,130 1414,160 1409,200 1408,285 1420,335 1408,385 1400,412 1396,440 1390,462 1385,490 1380,515 1368,540 1352,572 1345,605 1325,640 1308,668 1290,690 1270,710 1252,724 1235,742 1215,756 1180,772 1160,796 1135,808 1112,832 1060,866 1000,886 940,916 860,930 810,948 765,966 730,974 700,994 680,1012 664,1018 640,1022 605,1036 588,1048 578,1036 540,1036 498,1032 494,1018 482,1018 478,1025 455,1018 410,1002 375,996 362,988 358,974 350,980 330,970 315,955 288,928 270,905 260,882 248,868 240,845 230,825 228,790 218,760 206,720 200,710 192,696 197,664'), 0.45),
  ...pts(C, '180,615 160,560 143,525 135,490 122,455 115,415 106,392 108,378 118,370 125,370 128,358 118,320 108,280 90,218 104,212 107,172'),
  ...pts(B, '218,832 212,790 203,740 190,680 185,620 194,608 193,560 180,480 160,395 140,340 134,310 133,270 128,228 145,222 152,200 158,175 170,152 184,136 172,160 168,180 164,200 178,196 174,222 165,206 152,218 162,232 158,262 150,280 152,305 164,325 156,345 158,365 170,374 208,379 210,368 216,355 205,335 188,315 200,300 206,285 215,272 205,255 207,235 192,216 200,210 208,182 218,175 218,155 222,130 222,85 234,72 236,22 250,16 270,8'),
  ...rough(pts(A, '280,870 278,855 295,838 296,800 304,766 295,740 282,712 280,690 288,660 278,632 262,612'), 0.4),
  ...pts(A, '245,590 225,570 200,553 175,542 150,538 136,536 138,524 160,520 200,526 225,532 240,540 258,556 280,580 262,572 252,560 240,548 250,570 262,588 284,600 260,604 280,620'),
  ...rough(pts(A, '300,622 325,605 330,592 358,576 374,552 380,515 395,488 398,465 406,452 404,420 408,405 400,385 385,378 366,372 372,360 366,335'), 0.5),
  ...pts(A, '400,318 430,300 450,274 440,255 415,228 390,210 368,203'),
  ...rough(pts(A, '378,198 396,204 425,222 445,236 475,242 495,262 510,266 496,282 512,292 530,285 542,292 575,283 584,275 584,258'), 1),
  ...pts(A, '570,242 545,220 520,202 490,186 460,173 440,167 434,172 445,180 440,188 460,192 452,198 462,208 440,200 428,190 412,194 395,188 370,172 345,168 332,156 328,146 312,136 305,142 292,136 286,115 272,98'),
], true)

const islands = [
  '242,98 266,95 262,130 240,128', '232,136 250,138 265,154 288,150 290,156 275,162 283,172 300,180 318,184 320,174 334,170 328,178 334,190 330,200 316,202 312,192 285,180 270,188 250,172 238,155',
  '208,186 214,194 220,202 235,204 242,196 242,220 208,216 202,206', '180,160 188,146 194,152 186,166', '210,132 214,128 210,142', '180,190 186,188 187,206 180,208',
  '107,234 118,230 128,242 142,246 156,250 158,272 150,280 138,278 112,262', '334,276 342,274 344,282 338,287', '312,400 322,392 326,402 334,408 328,410 314,404', '24,336 29,336 28,340', '258,303 261,304 260,306',
].map((s) => line(pts(A, s), true)).join('')

const strips = [
  line(pts(A, '25,517 35,522 38,528 60,528 80,542 100,543')), line(pts(A, '110,540 134,541')),
].join('')
const spits = [
  line(pts(B, '180,22 181,50 186,75 189,97')), line(pts(B, '188,105 190,124')), line(pts(A, '262,612 275,640 284,660 278,690 281,716')), line(pts(A, '262,618 284,624 290,628')),
  line(pts(A, '315,186 330,182 334,174 322,190 332,196')), line(pts(C, '136,494 146,540')), line(pts(A, '238,186 232,198 240,205 225,200 212,196 212,190')), line(pts(A, '445,182 455,186 450,195 462,205')), line(pts(A, '242,145 262,150 275,160 290,156')),
].join('')

const borders = [
  pts(A, '500,192 505,170 518,160 522,148 545,168 580,192 612,214 614,240 630,252 650,258 685,286 710,290 728,294 720,316 708,322 706,354 690,344 672,328 662,364 594,370 592,388 540,393 530,388 492,392 478,400 470,410 470,436 454,436 430,450 406,452'),
  pts(A, '454,436 456,475 472,495 475,518 470,552 458,558 446,592 450,602 444,618 520,620 552,614 580,598 608,570 606,532 590,528 590,514 648,516 655,530 664,540 690,520 706,516 708,508 745,514 750,538 766,536 776,548 764,566 772,570 792,556 836,582 826,622 816,640 816,650'),
  pts(A, '826,624 886,614 905,600 920,598 950,598'),
  pts(A, '552,616 574,626 578,650 588,672 586,684 560,692 520,704 476,700 466,716 460,738 444,738 440,748 460,772 482,796 410,814 370,810 358,800 364,808 364,894'),
  [...pts(A, '482,796 484,828 506,842 518,872 546,882 556,862 574,858 574,836 600,808 618,788 660,808 680,796 700,774 722,754 748,720 730,706 726,690 710,688 712,674 750,674 780,658 816,650 836,640 860,646 880,660 904,674 916,700 898,720 895,745 905,770 915,795 902,822 918,848 938,874 940,905 968,926'), ...pts(D, '170,368 158,400 149,415 150,440')],
  [...pts(A, '280,870 320,880 352,894 364,894')],
  pts(B, '340,24 346,50 330,78 308,105 290,110 290,125 303,145 310,185 320,214 345,212 382,234 405,250 450,268 485,290 515,290 550,326 582,335 585,392 605,400 612,440 628,480'),
  pts(B, '382,234 382,260 392,300 412,320 405,385 408,405 385,402 365,422 345,460 322,475 316,520 290,545 294,572 275,572 262,605 257,635 257,670 265,720 275,770 282,830'),
  pts(B, '219,832 240,834 262,830 282,830 300,820 325,805 355,825 398,798 415,815 442,845'),
  pts(D, '150,440 132,462 130,484 68,486 56,532 40,565 36,620 48,622 34,656 50,668 56,690 70,680 98,688 80,705 76,745 66,788 42,795 40,830 46,868 75,876 98,862 115,866 120,850 186,848 245,840 262,850 275,875 296,895 308,876 332,892 347,870 347,835 340,790 345,740 347,712 380,700 410,706 412,695 390,648 395,500'),
  pts(D, '150,440 180,462 185,488 240,490 280,500 300,514 324,516 326,555 318,566 338,566 350,540 375,502 394,500 420,492 430,498 452,498'),
  pts(D, '347,835 400,836 435,882 480,896 482,912 472,942 490,964 520,981 594,982 612,972 622,1050 660,1016 680,1012 695,998 704,1008 706,1026 722,1020'),
  pts(B, '788,360 755,375 728,392 715,430 690,458 680,452 650,474 628,480 635,508 655,540 662,590 675,620 665,660 674,715 710,750 735,762 755,762 758,715 770,706 810,734 830,716 855,706 888,712 900,695 925,694'),
  [...pts(D, '186,848 190,880 180,905 176,940 175,1030'), ...pts(C, '835,80 848,145 865,204 850,214 830,222 740,226 728,222 724,205 692,176 706,200 704,222 680,250 654,290 618,284 610,298 558,302 562,315 595,352 575,388 560,380 535,340 510,330')],
  [...pts(D, '180,905 202,925 205,958 220,985 245,980 275,955 300,944 318,940 326,960 322,1000 314,1020 324,1070 345,1095 368,1125'), ...pts(C, '1028,172 1042,190 1056,180 1060,140 1090,128 1098,90 1130,65 1158,55 1160,75 1168,130 1165,145 1188,162 1192,190 1210,208 1185,230 1178,250 1190,288 1248,308 1250,345 1264,376 1250,626 1225,636 1165,680 1162,730 1105,732 1030,758 1022,774 1000,774 972,736 955,740 942,726 890,726 860,745 865,775 802,802')],
  pts(C, '1250,626 1285,655 1308,666'),
  pts(C, '1028,172 1005,178 1005,200 970,240 950,226 932,248 950,270 962,296 1000,292 1010,320 1008,355 995,395 925,435 942,455 920,470 896,474 888,520 906,524 896,570 910,602 880,620 866,644 850,600 825,572 808,550 790,565 765,570 735,548 762,520 735,505 732,485 745,475 740,440 710,405 735,402 760,370 805,355 812,320 828,300 828,240 818,222'),
  pts(C, '732,488 690,506 630,510 560,500 526,488 526,460 536,450 530,425 488,405 488,356 510,335 508,300 498,278 520,268 560,240 540,215 545,190 520,165 480,120 470,100 456,95 434,100 430,134 385,148 336,184 328,225 306,228 312,265 342,265 316,310 326,365'),
  pts(C, '125,366 135,378 165,385 215,388 250,408 268,406 270,382 290,368 345,365 350,400 325,440 336,465 322,468'),
  pts(C, '350,400 390,440 428,458 465,445 526,460'),
  pts(C, '135,492 165,512 200,502 235,476 248,484 262,470 280,498 290,482 288,472 322,466 338,525 370,575 372,590 408,625 402,635 454,718'),
  pts(C, '200,712 250,738 290,758 335,766 362,752 400,784 396,745 454,718 480,740 530,752 555,744 606,740 606,765 640,775 642,798 680,806 720,822 766,822 790,838 822,848 802,802 792,775 768,762 752,735 744,680 765,640 775,605 808,550'),
  pts(C, '530,756 508,765 525,800 515,812 500,805 480,785 455,785 458,795 485,820 490,845 485,858 458,855 462,885 455,900 490,938 460,960 475,980 458,990 455,1018'),
  pts(C, '642,798 635,820 605,855 602,872 635,890 632,915 655,925 650,955 634,968 655,985 655,1000 675,1010'),
  pts(C, '480,120 505,120 512,88 545,100 565,80 575,58'),
].map((p) => line(rough(p, 0.75))).join('')
</script>

<template>
  <div class="window">
    <header class="title">
      <svg class="applogo" viewBox="0 0 24 24" v-html="icons.qlogo" />
      <span>*question f — QGIS</span>
      <i class="sharebar" />
      <svg class="winbtns" viewBox="0 0 116 23"><path d="M9 11.500h10M100.500 6l9 9M109.500 6l-9 9M54.500 8.500h6v6h-6zM56.500 8.500v-2h6v6h-2" fill="none" stroke="#222" /></svg>
    </header>
    <nav class="menu">
      <span v-for="m in menus" :key="m[0] + m[1] + m[2]" :style="{ width: m[3] + 'px' }">{{ m[0] }}<u>{{ m[1] }}</u>{{ m[2] }}</span>
    </nav>
    <div v-for="(bar, b) in bars" :key="b" class="toolbar">
      <div v-for="(t, i) in bar" :key="i" class="tool" :class="[{ on: t.on, dim: t.dim }, 'k-' + t.k]" :style="{ marginLeft: gap(bar, i) }">
        <svg v-if="icons[t.k]" viewBox="0 0 24 24" v-html="icons[t.k]" />
      </div>
    </div>

    <main class="work">
      <aside class="left">
        <div class="dockhead"><span>Browser</span><i class="dk float" /><i class="dk close" /></div>
        <div class="docktools"><svg v-for="k in browserTools" :key="k" viewBox="0 0 24 24" v-html="icons[k]" /></div>
        <div class="tree">
          <div v-for="n in nodes" :key="n[3]" class="row" :class="'lv' + n[0]">
            <i class="exp" :class="n[1]" />
            <svg viewBox="0 0 24 24" v-html="icons[n[2]]" />
            <span :class="{ hot: n[0] === 1 }">{{ n[3] }}</span>
          </div>
        </div>
        <div class="split">······</div>
        <div class="dockhead"><span>Layers</span><i class="dk float" /><i class="dk close" /></div>
        <div class="docktools">
          <svg v-for="k in ['brush', 'group', 'eye', 'filterm']" :key="k" viewBox="0 0 24 24" v-html="icons[k]" />
          <svg class="fade" viewBox="0 0 24 24" v-html="icons.eps" /><i class="arr fade" />
          <svg v-for="k in ['expand', 'collapse', 'remove']" :key="k" viewBox="0 0 24 24" v-html="icons[k]" />
        </div>
        <div class="layers">
          <div class="layer"><i class="chk">✓</i><i class="swatch" /><b>district</b></div>
        </div>
      </aside>

      <section class="canvas">
        <svg viewBox="301 122 1399 889">
          <g fill="#d4b43b" stroke="#3b3a2c" stroke-width="1" stroke-linejoin="round">
            <path :d="coast" /><path :d="islands" />
          </g>
          <g fill="none" stroke="#2f2e20" stroke-width="1">
            <path :d="borders" /><path :d="spits" stroke-width="1.300" /><path :d="strips" stroke-dasharray="2 2.500" stroke-width="1.300" />
          </g>
        </svg>
      </section>

      <aside class="right">
        <div class="dockhead"><span>Statistics</span><i class="dk float" /><i class="dk close" /></div>
        <div class="combo"><svg viewBox="0 0 24 24" v-html="icons.poly" /><span>district</span><i class="arr" /></div>
        <div class="exprrow"><div class="combo expr"><i class="arr" /></div><div class="epsbtn">ε</div></div>
        <div class="stats"><div class="thead"><span>Statistic</span><span>Value</span></div></div>
        <div class="selrow"><i class="chk" /><span>Selected features only</span><svg class="cp" viewBox="0 0 24 24" v-html="icons.copy" /><svg viewBox="0 0 24 24" v-html="icons.refresh" /><div class="more">…<i class="arr" /></div></div>
        <div class="tabs"><span class="act">Statistics</span><span>Search QMS</span></div>
      </aside>
    </main>

    <footer class="status">
      <div class="field locate"><svg viewBox="0 0 24 24" v-html="icons.search" /><span>Type to locate (Ctrl+K)</span></div>
      <span class="msg">1 legend entry removed.</span>
      <span class="w1">Coordinate</span><div class="field coord">165687, 318591</div>
      <svg class="ext" viewBox="0 0 24 24" v-html="icons.extents" />
      <span class="w2">Scale</span><div class="field scale"><span>1:1941533</span><i class="btn"><i class="arr" /></i></div>
      <svg class="lock" viewBox="0 0 24 24" v-html="icons.lock" />
      <span class="w3">Magnifier</span><div class="field spin"><span>100%</span><i class="btn ud"><i class="arr up" /><i class="arr" /></i></div>
      <span class="w4">Rotation</span><div class="field spin"><span>0.0 °</span><i class="btn ud"><i class="arr up" /><i class="arr" /></i></div>
      <i class="chk">✓</i><span class="w5">Render</span>
      <svg class="crs" viewBox="0 0 24 24" v-html="icons.crs" /><span class="w6">Unknown CRS</span>
      <svg class="chat" viewBox="0 0 24 24" v-html="icons.chat" />
    </footer>

    <div class="taskbar">
      <div v-for="k in ['win', 'wsearch', 'taskview']" :key="k" class="sys"><svg viewBox="0 0 24 24" v-html="icons[k]" /></div>
      <div class="apps">
        <div v-for="a in apps" :key="a[0]" class="app" :class="a[1]"><svg viewBox="0 0 24 24" v-html="icons[a[0]]" /><em v-if="a[0] === 'whatsapp'">19</em></div>
      </div>
      <svg class="weather" viewBox="0 0 24 24" v-html="icons.weather" />
      <span class="temp">83°F</span><span class="cloudy">Partly cloudy</span>
      <div class="tray"><svg v-for="k in ['chev', 'meet', 'battery', 'sound', 'wifi']" :key="k" viewBox="0 0 24 24" v-html="icons[k]" /></div>
      <div class="clock"><span>8:08 PM</span><span>8/14/2023</span></div>
      <div class="notif"><svg viewBox="0 0 24 24" v-html="icons.notif" /><em>2</em></div>
      <i class="peek" />
    </div>
  </div>
</template>

<style>
body { margin: 0; overflow: hidden; }
</style>

<style scoped>
* { box-sizing: border-box; }
.window { width: 1920px; height: 1080px; display: flex; flex-direction: column; background: #efefef; font: 11.5px/16px "Open Sans", "Noto Sans", sans-serif; color: #111; letter-spacing: -0.1px; white-space: nowrap; overflow: hidden; }
svg { display: block; flex: none; }
i, em { font-style: normal; display: block; flex: none; }
.title { height: 23px; flex: none; background: #fff; display: flex; align-items: center; position: relative; padding-left: 2px; letter-spacing: -0.15px; }
.applogo { width: 16px; height: 16px; margin-right: 5px; }
.sharebar { position: absolute; left: 840px; top: 0; width: 241px; height: 1px; background: linear-gradient(90deg, #0f5679 48px, #222 48px); }
.winbtns { width: 116px; height: 23px; margin-left: auto; margin-right: 14px; margin-top: -2px; }
.menu { height: 20px; flex: none; padding-left: 10px; display: flex; align-items: center; border-bottom: 1px solid #d3d3d3; letter-spacing: -0.3px; }
.menu span { flex: none; }
.menu u { text-underline-offset: 2px; }
.toolbar { height: 39px; flex: none; display: flex; align-items: center; background: linear-gradient(#fafafa, #efefef); border-bottom: 1px solid #b5b5b5; }
.tool { width: 24px; height: 24px; flex: none; position: relative; }
.tool svg { width: 24px; height: 24px; position: relative; }
.tool.on::before { content: ""; position: absolute; inset: -4px; background: #dadada; border: 1px solid #aaa; border-radius: 3px; }
.tool.dim { opacity: 0.4; }
.tool.k-grip { width: 4px; height: 17px; background: radial-gradient(circle, #bbb 0.8px, transparent 1px) 0 0 / 2px 3px; }
.tool.k-sep { width: 2px; height: 28px; border-left: 1px solid #ccc; }
.tool.k-arr { width: 10px; height: 5px; }
.tool.k-arr::before { content: ""; display: block; border: 4px solid transparent; border-top: 5px solid #555; border-bottom: 0; width: 0; margin: auto; }
.arr { border: 4px solid transparent; border-top: 4px solid #555; border-bottom: 0; width: 8px; height: 4px; }
.arr.up { border-top: 0; border-bottom: 4px solid #555; }
.work { height: 891px; flex: none; display: flex; border-top: 1px solid #b5b5b5; }
.left { width: 294px; flex: none; display: flex; flex-direction: column; margin-right: 6px; }
.dockhead { height: 18px; display: flex; align-items: center; padding-left: 4px; flex: none; }
.dockhead span { flex: 1; }
.dk { width: 11px; height: 11px; border: 1px solid #666; border-radius: 2px; margin-right: 3px; position: relative; }
.dk.close { margin-right: 2px; }
.dk.float::before, .dk.float::after { content: ""; position: absolute; width: 5px; height: 5px; border: 1px solid #555; left: 1px; top: 3px; }
.dk.float::after { left: 3px; top: 1px; }
.dk.close::before, .dk.close::after { content: ""; position: absolute; left: 0; top: 3.5px; width: 9px; height: 2px; background: #444; transform: rotate(45deg); }
.dk.close::after { transform: rotate(-45deg); }
.docktools { height: 31px; display: flex; align-items: center; gap: 9px; padding: 0 0 1px 8px; flex: none; }
.docktools svg { width: 16px; height: 16px; }
.docktools .arr { margin: 0 0 0 -4px; }
.docktools .arr + svg { margin-left: -1px; }
.fade { opacity: 0.4; }
.tree { height: 393px; flex: none; background: #fff; border: 1px solid #b4b4b4; padding-top: 0; border-left: 0; letter-spacing: 0; }
.row { height: 18px; display: flex; align-items: center; padding-left: 5px; }
.row.lv1 { padding-left: 21px; }
.row.lv2 { padding-left: 38px; }
.row svg { width: 16px; height: 16px; margin: 0 6px 0 8px; }
.row.lv1 svg { width: 12px; height: 12px; margin: 0 6px 0 10px; }
.row.lv2 svg { width: 14px; height: 14px; margin: 0 7px 0 8px; }
.exp { width: 7px; height: 8px; }
.exp.r { border: 4px solid transparent; border-left: 4px solid #555; border-right: 0; width: 4px; margin: 0 1px 0 2px; }
.exp.d { border: 4px solid transparent; border-top: 4px solid #555; border-bottom: 0; width: 8px; height: 4px; margin-right: -1px; }
.hot { width: 125px; height: 18px; border: 1px solid #b5d6ee; border-radius: 1px; background: linear-gradient(#fafdff, #e8f3fd); padding-left: 2px; margin-left: -1px; }
.split { height: 7px; line-height: 5px; text-align: center; color: #888; font-size: 9px; flex: none; }
.layers { flex: 1; background: #fff; border: 1px solid #b4b4b4; border-left: 0; }
.layer { display: flex; align-items: center; height: 18px; padding-left: 24px; margin-top: 1px; }
.layer b { text-decoration: underline; text-underline-offset: 2px; margin-left: 6px; letter-spacing: -0.3px; }
.chk { width: 14px; height: 14px; background: #fff; border: 1px solid #b4b4b4; font: 700 13px/12px "DejaVu Sans", sans-serif; text-align: center; flex: none; letter-spacing: 0; }
.swatch { width: 16px; height: 16px; background: #d4b43b; border: 1px solid #8a7428; margin-left: 6px; }
.canvas { flex: none; width: 1401px; background: #fff; border: 1px solid #b4b4b4; border-top: 0; }
.canvas svg { width: 1399px; height: 889px; }
.right { flex: 1; margin-left: 6px; display: flex; flex-direction: column; overflow: hidden; }
.right .dockhead { height: 19px; }
.right .dk { margin-right: 3px; }
.right .dk.close { margin-right: 2px; }
.combo { height: 23px; flex: none; border: 1px solid #aaa; border-radius: 3px; background: linear-gradient(#fff, #f0f0f0); display: flex; align-items: center; padding: 0 7px 0 5px; }
.combo svg { width: 16px; height: 14px; margin-right: 3px; margin-top: -2px; }
.combo .arr { margin-left: auto; }
.exprrow { display: flex; margin-top: 3px; flex: none; }
.expr { width: 183px; background: linear-gradient(90deg, #fff 161px, #aaa 161px, #aaa 162px, #f6f6f6 162px); padding: 0 6px; }
.epsbtn { margin-left: 6px; width: 26px; border: 1px solid #aaa; border-radius: 3px; background: linear-gradient(#fff, #f0f0f0); font: 700 20px/17px "Liberation Serif", serif; color: #583e69; text-align: center; }
.stats { height: 768px; margin-top: 3px; flex: none; background: #fff; border: 1px solid #b4b4b4; }
.thead { display: flex; height: 19px; width: 201px; border-bottom: 1px solid #aaa; background: linear-gradient(#fafafa, #ededed); }
.thead span { flex: 1; text-align: center; line-height: 19px; }
.thead span + span { border-left: 1px solid #b4b4b4; }
.selrow { display: flex; align-items: center; height: 27px; flex: none; padding-top: 3px; letter-spacing: -0.4px; }
.selrow span { margin-left: 4px; width: 123px; flex: none; }
.selrow svg { width: 15px; height: 15px; }
.selrow .cp { opacity: 0.75; margin-right: 13px; width: 13px; height: 13px; }
.more { width: 24px; height: 18px; border: 1px solid #aaa; border-radius: 3px; background: #f8f8f8; display: flex; align-items: flex-end; padding-left: 5px; flex: none; margin-left: 7px; }
.more .arr { border-width: 4px 3px 0; width: 6px; }
.tabs { display: flex; height: 23px; border-top: 1px solid #b4b4b4; letter-spacing: -0.35px; align-items: flex-start; }
.tabs span { width: 82px; height: 21px; text-align: center; border: 1px solid #b4b4b4; border-top: 0; background: #dcdcdc; line-height: 20px; }
.tabs .act { width: 68px; height: 23px; background: #f7f7f7; line-height: 23px; border-radius: 0 0 3px 3px; padding-right: 3px; }
.status { height: 28px; flex: none; display: flex; align-items: center; padding-bottom: 0; padding-left: 4px; letter-spacing: -0.4px; }
.field { height: 22px; background: #fff; border: 1px solid #aaa; border-radius: 3px; display: flex; align-items: center; flex: none; padding-left: 6px; }
.status > span { flex: none; }
.locate { width: 200px; color: #777; }
.locate svg { width: 13px; height: 13px; margin: 0 7px 0 2px; }
.msg { margin-left: 8px; width: 902px; letter-spacing: -0.5px; }
.w1 { width: 57px; }
.coord { width: 93px; }
.ext { width: 13px; height: 16px; margin-left: 6px; }
.w2 { margin-left: 14px; width: 29px; }
.scale { width: 80px; padding-left: 4px; }
.btn { height: 20px; margin-left: auto; border-left: 1px solid #aaa; width: 19px; display: flex; align-items: center; justify-content: center; background: #f5f5f5; border-radius: 0 2px 2px 0; }
.btn.ud { flex-direction: column; gap: 4px; width: 14px; }
.lock { width: 13px; height: 15px; margin-left: 13px; }
.w3 { margin-left: 7px; width: 48px; letter-spacing: -0.5px; }
.spin { width: 84px; padding-left: 5px; }
.w4 { margin-left: 8px; width: 51px; }
.status .chk { margin-left: 7px; }
.w5 { margin-left: 3px; width: 51px; }
.crs { width: 15px; height: 14px; }
.w6 { margin-left: 1px; width: 92px; letter-spacing: -0.5px; }
.chat { width: 16px; height: 14px; }
.taskbar { height: 40px; flex: none; background: #1c1c1c; color: #fff; display: flex; align-items: center; }
.sys { width: 48px; display: flex; justify-content: center; flex: none; }
.sys svg { width: 22px; height: 22px; }
.apps { display: flex; margin-left: 2px; flex: none; }
.app { width: 49px; height: 40px; display: flex; align-items: center; justify-content: center; position: relative; flex: none; }
.app svg { width: 24px; height: 24px; }
.app.u::after, .app.a::after { content: ""; position: absolute; left: 4px; right: 4px; bottom: 0; height: 2px; background: #5a9fc8; }
.app.a { background: #4a4a4a; }
.app.a::after { left: 0; right: 0; }
.app em { position: absolute; left: 28px; top: 18px; width: 19px; height: 19px; border-radius: 50%; background: #333; border: 1px solid #999; font: 11px/17px "Open Sans", sans-serif; text-align: center; letter-spacing: -0.3px; }
.weather { width: 24px; height: 24px; margin-left: 145px; }
.temp, .cloudy { font-size: 14px; letter-spacing: -0.45px; flex: none; }
.temp { margin-left: 9px; width: 36px; }
.cloudy { width: 100px; }
.tray { display: flex; gap: 9px; margin-left: 2px; flex: none; }
.tray svg { width: 15px; height: 15px; }
.clock { width: 62px; margin-left: 5px; display: flex; flex-direction: column; text-align: center; line-height: 18px; padding-bottom: 1px; letter-spacing: -0.35px; flex: none; }
.notif { width: 39px; height: 40px; background: #252525; display: flex; align-items: center; padding-left: 12px; position: relative; flex: none; }
.notif svg { width: 17px; height: 17px; margin-top: -4px; }
.notif em { position: absolute; left: 20px; top: 18px; width: 17px; height: 17px; border-radius: 50%; background: #444; border: 1px solid #aaa; font: 12px/15px "Open Sans", sans-serif; text-align: center; }
.peek { width: 1px; height: 40px; background: #555; margin-left: 8px; }
</style>
